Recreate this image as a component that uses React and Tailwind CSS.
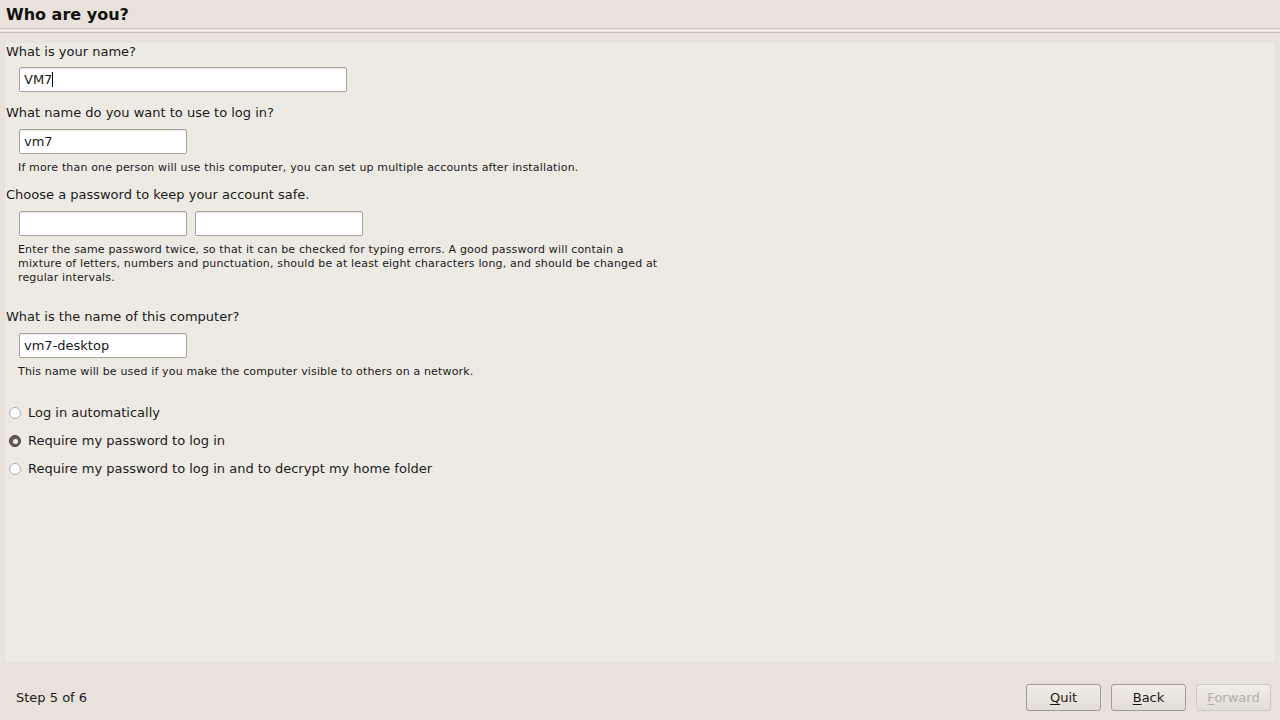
import { useState } from 'react'

function Field({ value, w = 'w-[168px]', caret }) {
  return (
    <div className={`${w} h-[25px] bg-white border border-[#a8a39b] rounded-[2px] flex items-center px-[4px] text-[13px] text-[#1a1a1a] shadow-[inset_0_1px_1px_rgba(0,0,0,0.08)]`}>
      <span>{value}</span>
      {caret && <span className="w-px h-[15px] bg-black" />}
    </div>
  )
}

function Radio({ checked, label }) {
  return (
    <label className="flex items-center gap-[7px] h-[28px]">
      <span
        className={
          checked
            ? 'w-[12px] h-[12px] rounded-full bg-[#6b5a50] border border-[#4b3f38] flex items-center justify-center'
            : 'w-[12px] h-[12px] rounded-full bg-white border border-[#b0aba3]'
        }
      >
        {checked && <span className="w-[5px] h-[5px] rounded-full bg-[#f2eee8]" />}
      </span>
      <span className="text-[13px] text-[#1a1a1a]">{label}</span>
    </label>
  )
}

function Btn({ children, disabled }) {
  return (
    <button
      className={`w-[75px] h-[27px] rounded-[3px] border text-[13px] bg-gradient-to-b from-[#f1ede7] to-[#e2ddd5] ${
        disabled ? 'border-[#cdc8c0] text-[#b4aea5]' : 'border-[#a19b92] text-[#1a1a1a]'
      }`}
    >
      {children}
    </button>
  )
}

export default function App() {
  const [mode, setMode] = useState(1)
  return (
    <div className="h-screen w-full bg-[#e8e2da] flex flex-col font-['DejaVu_Sans',sans-serif] text-[#1a1a1a]">
      <div className="h-[28px] flex items-center px-[6px] pt-[2px]">
        <h1 className="text-[16px] font-bold text-[#111]">Who are you?</h1>
      </div>
      <div className="flex flex-col gap-[1px]">
        <div className="h-px bg-[#cdc4b9]" />
        <div className="h-px bg-[#f6f3ef]" />
        <div className="h-px bg-[#c9c0b4]" />
      </div>
      <div className="mt-[10px] mx-[5px] flex-1 bg-[#edeae4] flex flex-col pl-[1px] pt-[1px]">
        <div className="text-[13px] leading-[16px]">What is your name?</div>
        <div className="mt-[7px] ml-[13px]">
          <Field value="VM7" w="w-[328px]" caret />
        </div>
        <div className="mt-[13px] text-[13px] leading-[16px]">What name do you want to use to log in?</div>
        <div className="mt-[8px] ml-[13px]">
          <Field value="vm7" />
        </div>
        <div className="mt-[7px] ml-[12px] text-[11px] leading-[14px] tracking-[0.16px]">
          If more than one person will use this computer, you can set up multiple accounts after installation.
        </div>
        <div className="mt-[12px] text-[13px] leading-[16px]">Choose a password to keep your account safe.</div>
        <div className="mt-[8px] ml-[13px] flex gap-[8px]">
          <Field value="" />
          <Field value="" />
        </div>
        <div className="mt-[7px] ml-[12px] w-[652px] text-[11px] leading-[14px] tracking-[0.16px]">
          Enter the same password twice, so that it can be checked for typing errors. A good password will contain a mixture of letters, numbers and punctuation, should be at least eight characters long, and should be changed at regular intervals.
        </div>
        <div className="mt-[24px] text-[13px] leading-[16px]">What is the name of this computer?</div>
        <div className="mt-[8px] ml-[13px]">
          <Field value="vm7-desktop" />
        </div>
        <div className="mt-[7px] ml-[12px] text-[11px] leading-[14px] tracking-[0.16px]">
          This name will be used if you make the computer visible to others on a network.
        </div>
        <div className="mt-[20px] ml-[3px] flex flex-col">
          {['Log in automatically', 'Require my password to log in', 'Require my password to log in and to decrypt my home folder'].map(
            (l, i) => (
              <div key={l} onClick={() => setMode(i)}>
                <Radio checked={mode === i} label={l} />
              </div>
            )
          )}
        </div>
      </div>
      <div className="h-[58px] flex items-start justify-between pt-[22px] pl-[16px] pr-[9px]">
        <span className="text-[13px] leading-[27px]">Step 5 of 6</span>
        <div className="flex gap-[10px]">
          <Btn><span className="underline underline-offset-2">Q</span>uit</Btn>
          <Btn><span className="underline underline-offset-2">B</span>ack</Btn>
          <Btn disabled><span className="underline underline-offset-2">F</span>orward</Btn>
        </div>
      </div>
    </div>
  )
}
